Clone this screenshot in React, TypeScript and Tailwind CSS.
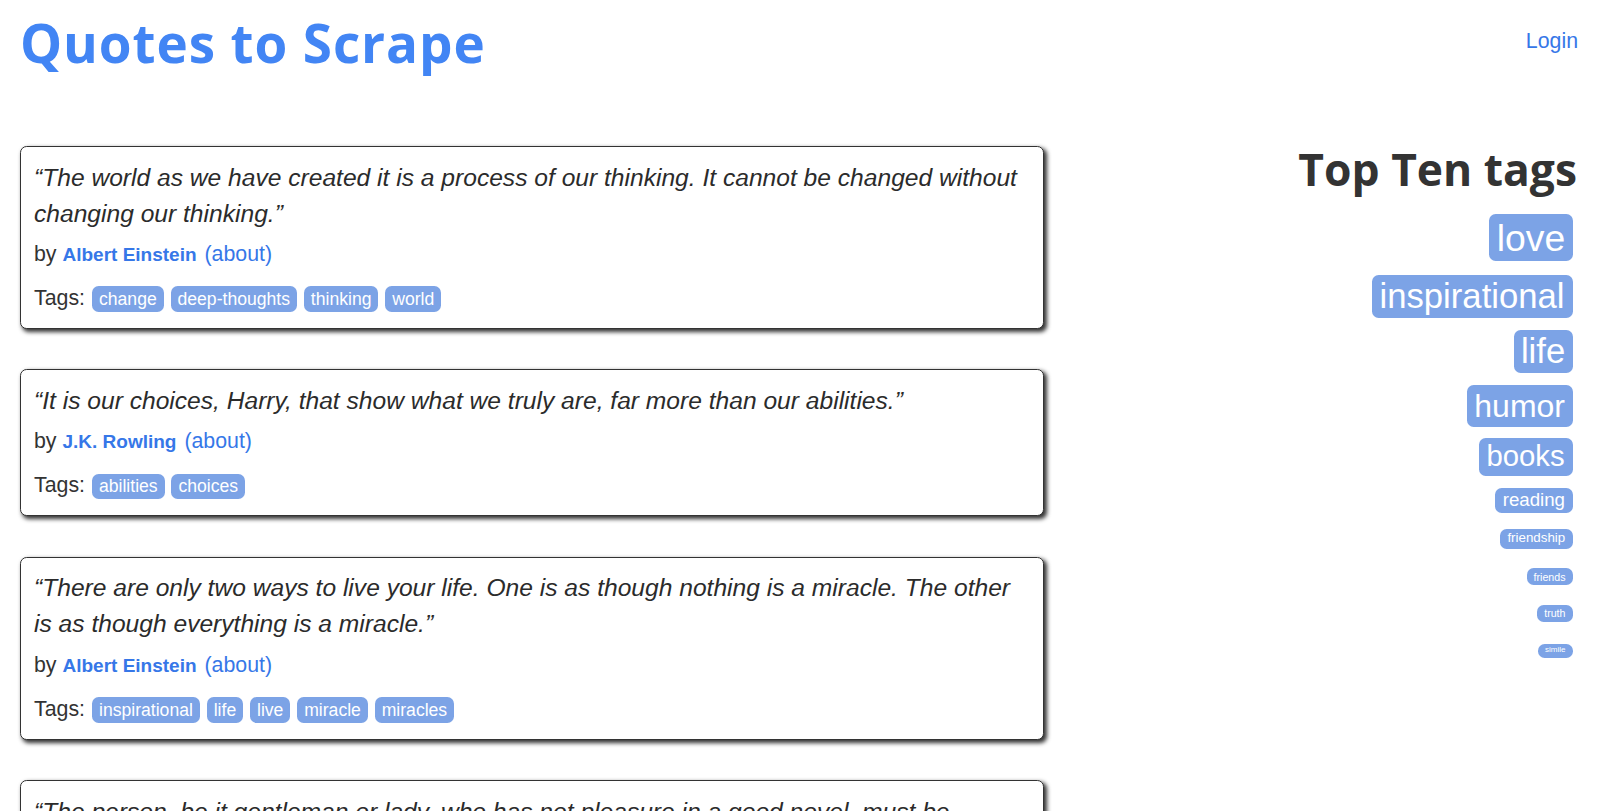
import React from "react";

type Quote = {
  text: string;
  author: string;
  tags: string[];
};

const quotes: Quote[] = [
  {
    text: "“The world as we have created it is a process of our thinking. It cannot be changed without changing our thinking.”",
    author: "Albert Einstein",
    tags: ["change", "deep-thoughts", "thinking", "world"],
  },
  {
    text: "“It is our choices, Harry, that show what we truly are, far more than our abilities.”",
    author: "J.K. Rowling",
    tags: ["abilities", "choices"],
  },
  {
    text: "“There are only two ways to live your life. One is as though nothing is a miracle. The other is as though everything is a miracle.”",
    author: "Albert Einstein",
    tags: ["inspirational", "life", "live", "miracle", "miracles"],
  },
  {
    text: "“The person, be it gentleman or lady, who has not pleasure in a good novel, must be intolerably stupid.”",
    author: "Jane Austen",
    tags: ["aliteracy", "books", "classic", "humor"],
  },
];

const topTags: { name: string; cls: string }[] = [
  { name: "love", cls: "mt-[22.6px] text-[37.33px] leading-[42px] px-[7.3px]" },
  { name: "inspirational", cls: "mt-[13.3px] text-[34.67px] leading-[38px] px-[8px]" },
  { name: "life", cls: "mt-[11.7px] text-[34.67px] leading-[38px] px-[7.3px]" },
  { name: "humor", cls: "mt-[12.4px] text-[32px] leading-[36.3px] px-[7.5px]" },
  { name: "books", cls: "mt-[11px] text-[29.33px] leading-[32.4px] px-[7.8px]" },
  { name: "reading", cls: "mt-[12.3px] text-[18.67px] leading-[19.7px] px-[7.5px]" },
  { name: "friendship", cls: "mt-[15.7px] text-[13.33px] leading-[14.7px] px-[7.3px]" },
  { name: "friends", cls: "mt-[19.3px] text-[10.67px] leading-[12px] px-[7px]" },
  { name: "truth", cls: "mt-[20px] text-[10.67px] leading-[11.7px] px-[7px]" },
  { name: "simile", cls: "mt-[21.6px] text-[8px] leading-[8.7px] px-[7px]" },
];

function QuoteCard({ q }: { q: Quote }) {
  return (
    <div className="mb-[40.5px] rounded-[6.67px] border border-[#333333] bg-white px-[13px] pt-[12.5px] pb-[16px] shadow-[2.67px_2.67px_4px_#333333]">
      <div className="text-[24.6px] leading-[36px] italic text-[#2b2b2b]">{q.text}</div>
      <div className="mt-[9.4px] text-[21.33px] leading-[26.67px] text-[#333333]">
        by <span className="text-[19px] font-bold text-[#3677e8]">{q.author}</span>{" "}
        <a className="ml-[2px] text-[#3677e8]" href="#">
          (about)
        </a>
      </div>
      <div className="mt-[16.5px] flex flex-wrap items-baseline text-[21.33px] leading-[26.67px] text-[#333333]">
        <span className="mr-[7px]">Tags:</span>
        {q.tags.map((t) => (
          <a
            key={t}
            href="#"
            className="mr-[6.8px] rounded-[6.67px] bg-[#7ca3e6] px-[7px] py-[2.67px] text-[17.6px] leading-[20.2px] text-white"
          >
            {t}
          </a>
        ))}
      </div>
    </div>
  );
}

export default function App() {
  return (
    <div className="min-h-screen w-full overflow-hidden bg-white font-['Liberation_Sans',Arial,sans-serif] text-[#333333]">
      <header className="flex items-start justify-between pl-[20px] pr-[22px] pt-[16px]">
        <h1 className="font-['Open_Sans',sans-serif] text-[53px] font-bold leading-[53px] tracking-[0.9px] text-[#4285f4]">
          Quotes to Scrape
        </h1>
        <a href="#" className="mt-[11.5px] text-[21.33px] leading-[26.67px] text-[#3677e8]">
          Login
        </a>
      </header>
      <main className="mt-[77px] flex pl-[20px] pr-[23px]">
        <div className="w-[1024px] shrink-0">
          {quotes.map((q, i) => (
            <QuoteCard key={i} q={q} />
          ))}
        </div>
        <aside className="flex flex-1 flex-col items-end">
          <h2 className="mt-[1.3px] font-['Open_Sans',sans-serif] text-[44.4px] font-bold leading-[44px] text-[#333333]">
            Top Ten tags
          </h2>
          <div className="flex flex-col items-end pr-[4.5px]">
            {topTags.map((t) => (
              <a
                key={t.name}
                href="#"
                className={`rounded-[6.67px] bg-[#7ca3e6] py-[2.67px] text-white ${t.cls}`}
              >
                {t.name}
              </a>
            ))}
          </div>
        </aside>
      </main>
    </div>
  );
}
